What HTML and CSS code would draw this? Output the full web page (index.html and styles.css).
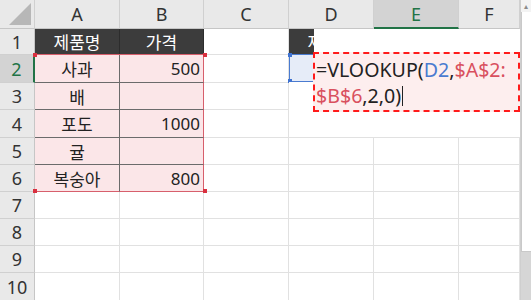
FILE: index.html
```html
<!DOCTYPE html>
<html lang="ko">
<head>
    <meta charset="UTF-8">
    <title>VLOOKUP</title>
    <link rel="stylesheet" href="styles.css">
</head>
<body>
    <div class="sheet">
        <div class="grid">
            <div class="corner"><span class="tri"></span></div>
            <div class="col-head">A</div>
            <div class="col-head">B</div>
            <div class="col-head">C</div>
            <div class="col-head">D</div>
            <div class="col-head active">E</div>
            <div class="col-head">F</div>

            <div class="row-head">1</div>
            <div class="cell title">제품명</div>
            <div class="cell title">가격</div>
            <div class="cell"></div>
            <div class="cell title">제품명</div>
            <div class="cell"></div>
            <div class="cell"></div>

            <div class="row-head active">2</div>
            <div class="cell item">사과</div>
            <div class="cell item num last">500</div>
            <div class="cell"></div>
            <div class="cell"></div>
            <div class="cell"></div>
            <div class="cell"></div>

            <div class="row-head">3</div>
            <div class="cell item">배</div>
            <div class="cell item num last"></div>
            <div class="cell"></div>
            <div class="cell"></div>
            <div class="cell"></div>
            <div class="cell"></div>

            <div class="row-head">4</div>
            <div class="cell item">포도</div>
            <div class="cell item num last">1000</div>
            <div class="cell"></div>
            <div class="cell"></div>
            <div class="cell"></div>
            <div class="cell"></div>

            <div class="row-head">5</div>
            <div class="cell item">귤</div>
            <div class="cell item num last"></div>
            <div class="cell"></div>
            <div class="cell"></div>
            <div class="cell"></div>
            <div class="cell"></div>

            <div class="row-head">6</div>
            <div class="cell item bottom">복숭아</div>
            <div class="cell item num last bottom">800</div>
            <div class="cell"></div>
            <div class="cell"></div>
            <div class="cell"></div>
            <div class="cell"></div>

            <div class="row-head">7</div>
            <div class="cell"></div><div class="cell"></div><div class="cell"></div>
            <div class="cell"></div><div class="cell"></div><div class="cell"></div>

            <div class="row-head">8</div>
            <div class="cell"></div><div class="cell"></div><div class="cell"></div>
            <div class="cell"></div><div class="cell"></div><div class="cell"></div>

            <div class="row-head">9</div>
            <div class="cell"></div><div class="cell"></div><div class="cell"></div>
            <div class="cell"></div><div class="cell"></div><div class="cell"></div>

            <div class="row-head">10</div>
            <div class="cell"></div><div class="cell"></div><div class="cell"></div>
            <div class="cell"></div><div class="cell"></div><div class="cell"></div>

            <!-- reference highlights -->
            <div class="ref-range">
                <span class="handle tl"></span>
                <span class="handle tr"></span>
                <span class="handle bl"></span>
                <span class="handle br"></span>
            </div>
            <div class="ref-cell">
                <span class="handle tl"></span>
                <span class="handle bl"></span>
            </div>

            <div class="cover cover-top"></div>
            <div class="cover cover-low"></div>

            <div class="formula">
                =VLOOKUP(<span class="blue">D2</span>,<span class="red">$A$2:</span><br><span class="red">$B$6</span>,2,0)<span class="caret"></span>
            </div>
        </div>
        <div class="scrollbar">
            <div class="arrow">&#9652;</div>
            <div class="thumb"></div>
            <div class="track"></div>
        </div>
    </div>
</body>
</html>
```

FILE: styles.css
```css
body {
    margin: 0;
    width: 531px;
    height: 300px;
    overflow: hidden;
    background: #fff;
    font-family: "Noto Sans", "Noto Sans CJK KR", sans-serif;
    color: #222;
}
.sheet {
    display: flex;
    height: 300px;
}
.grid {
    position: relative;
    display: grid;
    grid-template-columns: 35px 85px 84px 85px 85px 85px 61px;
    grid-template-rows: 29px 26px 28px 27px 28px 27px 27px 27px 27px 27px 28px;
    width: 520px;
}
.corner {
    position: relative;
    background: #e9e9e9;
    border-right: 1px solid #d0d0d0;
    border-bottom: 1px solid #c6c6c6;
}
.tri {
    position: absolute;
    right: 3px;
    bottom: 3px;
    width: 0;
    height: 0;
    border-left: 22px solid transparent;
    border-bottom: 22px solid #b7b7b7;
}
.col-head, .row-head {
    display: flex;
    align-items: center;
    justify-content: center;
    background: #e9e9e9;
    color: #333;
    font-size: 18px;
    border-right: 1px solid #d0d0d0;
    border-bottom: 1px solid #c6c6c6;
    box-sizing: border-box;
}
.row-head {
    border-bottom: 1px solid #d0d0d0;
    border-right: 1px solid #c6c6c6;
}
.col-head.active {
    background: #d3d3d3;
    color: #217346;
    border-bottom: 2px solid #217346;
}
.row-head.active {
    background: #d3d3d3;
    color: #217346;
    border-right: 2px solid #217346;
}
.cell {
    box-sizing: border-box;
    border-right: 1px solid #e1e1e1;
    border-bottom: 1px solid #e1e1e1;
    font-size: 17px;
    display: flex;
    align-items: center;
    justify-content: center;
}
.cell.title {
    background: #3c3c3c;
    color: #fff;
    border-right-color: #2c2c2c;
    border-bottom-color: #2c2c2c;
}
.cell.item {
    background: #fbe6e8;
    border-right-color: #6b6b6b;
    border-bottom-color: #6b6b6b;
}
.cell.num {
    justify-content: flex-end;
    padding-right: 3px;
}
.cell.last {
    border-right-color: #d75f6c;
}
.cell.bottom {
    border-bottom-color: #d75f6c;
}
.ref-range {
    position: absolute;
    left: 35px;
    top: 54px;
    width: 169px;
    height: 137px;
    border-top: 1px solid #d75f6c;
    box-sizing: border-box;
}
.ref-range .handle {
    background: #d9303f;
}
.handle {
    position: absolute;
    width: 4px;
    height: 4px;
}
.handle.tl { left: -2px; top: -2px; }
.handle.tr { right: -3px; top: -2px; }
.handle.bl { left: -2px; bottom: -2px; }
.handle.br { right: -3px; bottom: -2px; }
.ref-cell {
    position: absolute;
    left: 289px;
    top: 54px;
    width: 85px;
    height: 28px;
    box-sizing: border-box;
    background: #e6ecf8;
    border: 1px solid #4a7bd0;
}
.ref-cell .handle {
    background: #3f73d1;
}
.cover {
    position: absolute;
    background: #fff;
}
.cover-top {
    left: 314px;
    top: 29px;
    width: 206px;
    height: 108px;
}
.cover-low {
    left: 289px;
    top: 82px;
    width: 30px;
    height: 55px;
}
.formula {
    position: absolute;
    left: 313px;
    top: 52px;
    width: 207px;
    height: 60px;
    box-sizing: border-box;
    border: 2px dashed #ff1a1a;
    background: #fdeeee;
    padding: 3px 0 0 1px;
    font-size: 19.6px;
    line-height: 26px;
    color: #222;
    white-space: nowrap;
}
.blue {
    color: #4a7bd0;
}
.red {
    color: #d9505e;
}
.caret {
    display: inline-block;
    width: 1px;
    height: 20px;
    background: #222;
    vertical-align: -3px;
    margin-left: 1px;
}
.scrollbar {
    width: 11px;
    display: flex;
    flex-direction: column;
    border-left: 1px solid #cfcfcf;
    background: #f3f3f3;
}
.arrow {
    height: 12px;
    font-size: 8px;
    line-height: 12px;
    text-align: center;
    color: #8a8a8a;
}
.thumb {
    height: 240px;
    background: #fff;
    border-left: 1px solid #c9c9c9;
    border-bottom: 1px solid #c9c9c9;
    box-sizing: border-box;
}
.track {
    flex: 1;
    background: #d6d6d6;
}
```
